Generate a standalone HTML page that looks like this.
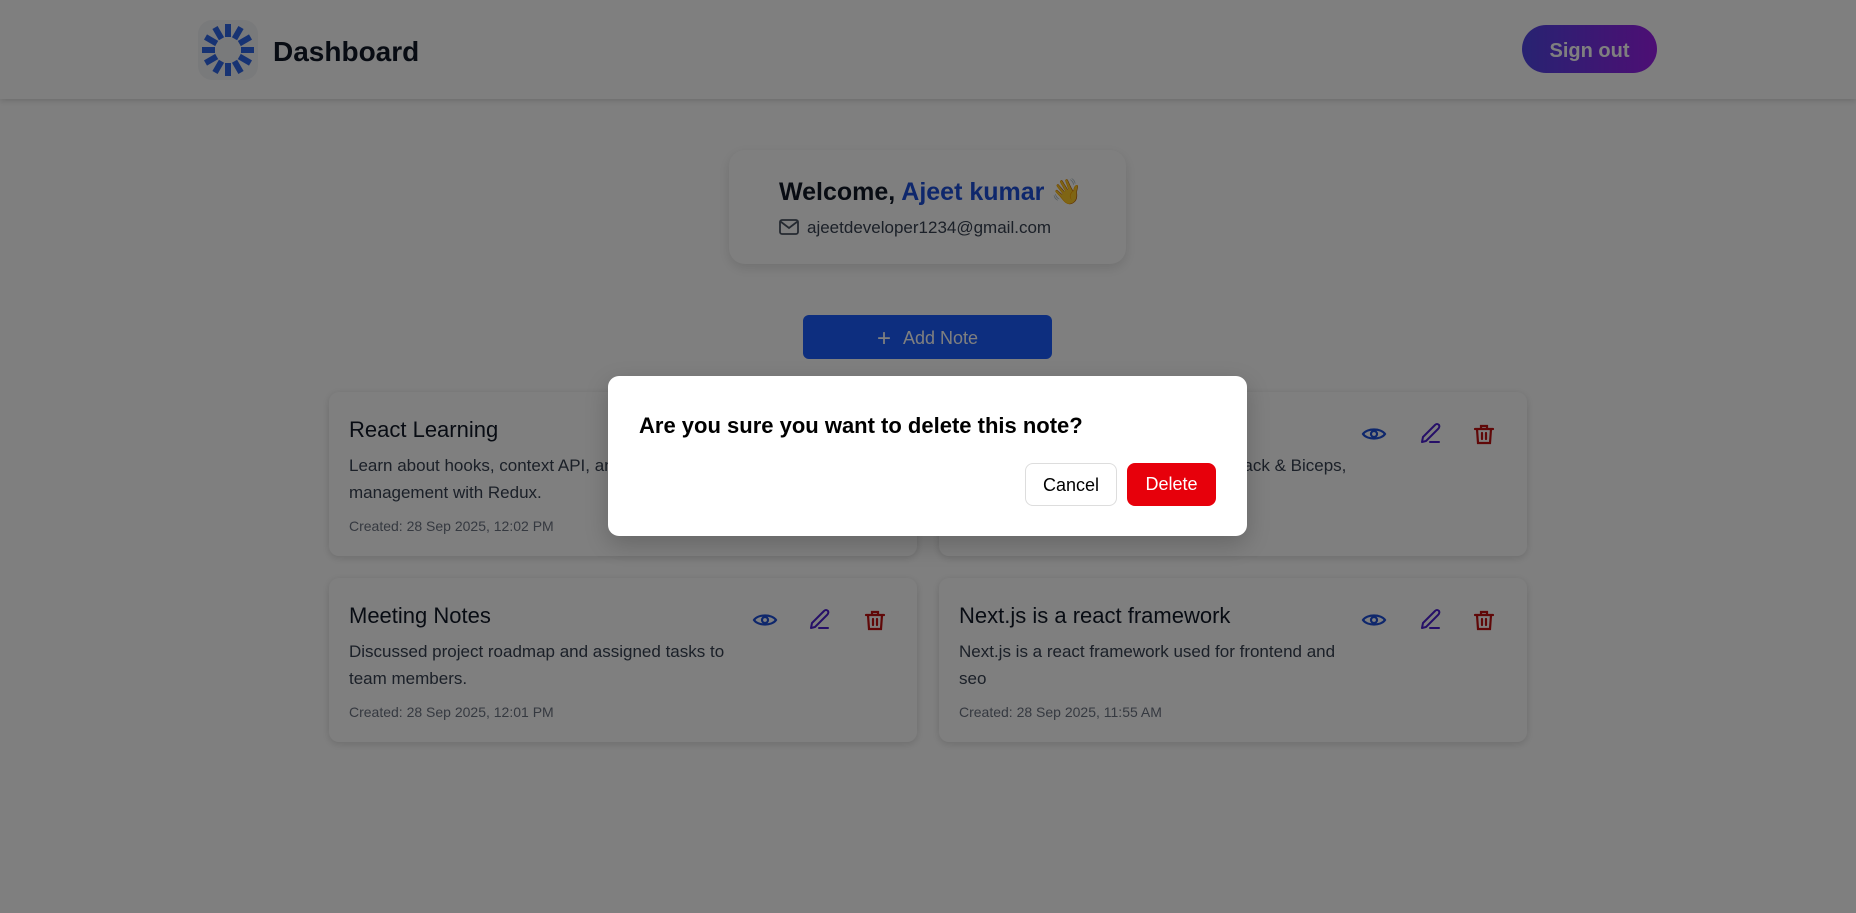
<!DOCTYPE html>
<html><head><meta charset="utf-8"><style>
*{box-sizing:border-box;margin:0;padding:0}
body{width:1856px;height:913px;overflow:hidden;background:#fff;font-family:"Liberation Sans",sans-serif;position:relative}
.hdr{position:absolute;left:0;top:0;width:1856px;height:99px;background:#fff;box-shadow:0 2px 6px rgba(0,0,0,.15)}
.logo{position:absolute;left:198px;top:20px;width:60px;height:60px;border-radius:14px;background:#f3f4f6}
.ttl{position:absolute;left:273px;top:36px;font-size:28px;font-weight:bold;color:#111827}
.so{position:absolute;left:1522px;top:25px;width:135px;height:48px;border-radius:24px;background:linear-gradient(90deg,#5046e5,#9a1ee8);color:#fff;font-size:20px;font-weight:bold;text-align:center;line-height:52px}
.wc{position:absolute;left:729px;top:150px;width:397px;height:114px;background:#fff;border-radius:16px;box-shadow:0 4px 12px rgba(0,0,0,.12)}
.wc h2{position:absolute;left:50px;top:28px;font-size:25px;font-weight:bold;color:#111827;white-space:nowrap}
.wc h2 span{color:#1d4ed8}
.wc p{position:absolute;left:50px;top:68px;font-size:17px;color:#374151;white-space:nowrap}
.add{position:absolute;left:803px;top:315px;width:249px;height:44px;border-radius:6px;background:#1a5cff;color:#fff;font-size:18px;text-align:center;line-height:46px}
.card{position:absolute;width:588px;height:164px;background:#fff;border-radius:10px;box-shadow:0 2px 8px rgba(0,0,0,.15)}
.card h3{position:absolute;left:20px;top:25px;font-size:22px;font-weight:normal;color:#111827;white-space:nowrap}
.card .d{position:absolute;left:20px;top:60px;width:405px;font-size:17px;line-height:27px;color:#374151}
.card .c{position:absolute;left:20px;top:126px;font-size:14px;color:#6b7280}
.ov{position:absolute;left:0;top:0;width:1856px;height:913px;background:rgba(0,0,0,.5)}
.modal{position:absolute;left:608px;top:376px;width:639px;height:160px;background:#fff;border-radius:11px;box-shadow:0 8px 24px rgba(0,0,0,.2)}
.modal h4{position:absolute;left:31px;top:37px;font-size:22px;font-weight:bold;color:#000;white-space:nowrap}
.b{position:absolute;top:87px;height:43px;border-radius:8px;font-size:18px;text-align:center;line-height:43px}
</style></head><body>
<div class="hdr">
<div class="logo"><svg width="60" height="60" viewBox="0 0 60 60"><g stroke="#2f66e6" stroke-width="6" stroke-linecap="butt">
<line x1="30" y1="4" x2="30" y2="17"/><line x1="30" y1="43" x2="30" y2="56"/><line x1="4" y1="30" x2="17" y2="30"/><line x1="43" y1="30" x2="56" y2="30"/>
<line x1="17" y1="7.5" x2="23.5" y2="18.7"/><line x1="36.5" y1="41.3" x2="43" y2="52.5"/><line x1="43" y1="7.5" x2="36.5" y2="18.7"/><line x1="23.5" y1="41.3" x2="17" y2="52.5"/>
<line x1="7.5" y1="17" x2="18.7" y2="23.5"/><line x1="41.3" y1="36.5" x2="52.5" y2="43"/><line x1="52.5" y1="17" x2="41.3" y2="23.5"/><line x1="18.7" y1="36.5" x2="7.5" y2="43"/></g></svg></div>
<div class="ttl">Dashboard</div>
<div class="so">Sign out</div>
</div>
<div class="wc"><h2>Welcome, <span>Ajeet kumar</span> 👋</h2>
<p><svg width="20" height="16" viewBox="0 0 20 16" style="vertical-align:-2px;margin-right:8px"><rect x="1" y="1" width="18" height="14" rx="2" fill="none" stroke="#4b5563" stroke-width="1.8"/><path d="M1.5 2.5 10 9l8.5-6.5" fill="none" stroke="#4b5563" stroke-width="1.8"/></svg>ajeetdeveloper1234@gmail.com</p></div>
<div class="add"><span style="font-size:24px;vertical-align:-2px;margin-right:12px">+</span>Add Note</div>

<div class="card" style="left:329px;top:392px"><h3>React Learning</h3><div class="d">Learn about hooks, context API, and state management with Redux.</div><div class="c">Created: 28 Sep 2025, 12:02 PM</div></div>
<div class="card" style="left:939px;top:392px"><h3>Workout Plan</h3><div class="d">Monday: Chest &amp; Triceps, Tuesday: Back &amp; Biceps, Wednesday: Legs</div><div class="c">Created: 28 Sep 2025, 12:01 PM</div></div>
<div class="card" style="left:329px;top:578px"><h3>Meeting Notes</h3><div class="d">Discussed project roadmap and assigned tasks to team members.</div><div class="c">Created: 28 Sep 2025, 12:01 PM</div></div>
<div class="card" style="left:939px;top:578px"><h3>Next.js is a react framework</h3><div class="d">Next.js is a react framework used for frontend and seo</div><div class="c">Created: 28 Sep 2025, 11:55 AM</div></div>

<svg style="position:absolute;left:0;top:0" width="1856" height="913">
<defs>
<g id="eye"><path d="M-11 0C-7-6 7-6 11 0 7 6-7 6-11 0Z" fill="none" stroke="#1d4ed8" stroke-width="2.2"/><circle r="3" fill="none" stroke="#1d4ed8" stroke-width="2.2"/></g>
<g id="pen" fill="none" stroke="#4c1fd0" stroke-width="2" stroke-linecap="round" stroke-linejoin="round"><path d="M-8 9-7 4 5-8Q7-10 9-8 10-6 8-4L-4 8Z"/><path d="M0 9H9"/></g>
<g id="tr" fill="none" stroke="#c01010" stroke-width="2.2" stroke-linecap="round"><path d="M-9-5H9M-3-5V-8H3V-5M-7-5-6 9H6L7-5M-2-1V5M2-1V5"/></g>
</defs>
<use href="#eye" x="1374" y="434"/><use href="#pen" x="1430" y="433"/><use href="#tr" x="1484" y="434"/>
<use href="#eye" x="765" y="620"/><use href="#pen" x="819" y="619"/><use href="#tr" x="875" y="620"/>
<use href="#eye" x="1374" y="620"/><use href="#pen" x="1430" y="619"/><use href="#tr" x="1484" y="620"/>
</svg>

<div class="ov"></div>
<div class="modal"><h4>Are you sure you want to delete this note?</h4>
<div class="b" style="left:417px;width:92px;border:1px solid #ddd;background:#fff;color:#000">Cancel</div>
<div class="b" style="left:519px;width:89px;background:#e7000b;color:#fff">Delete</div></div>
</body></html>
